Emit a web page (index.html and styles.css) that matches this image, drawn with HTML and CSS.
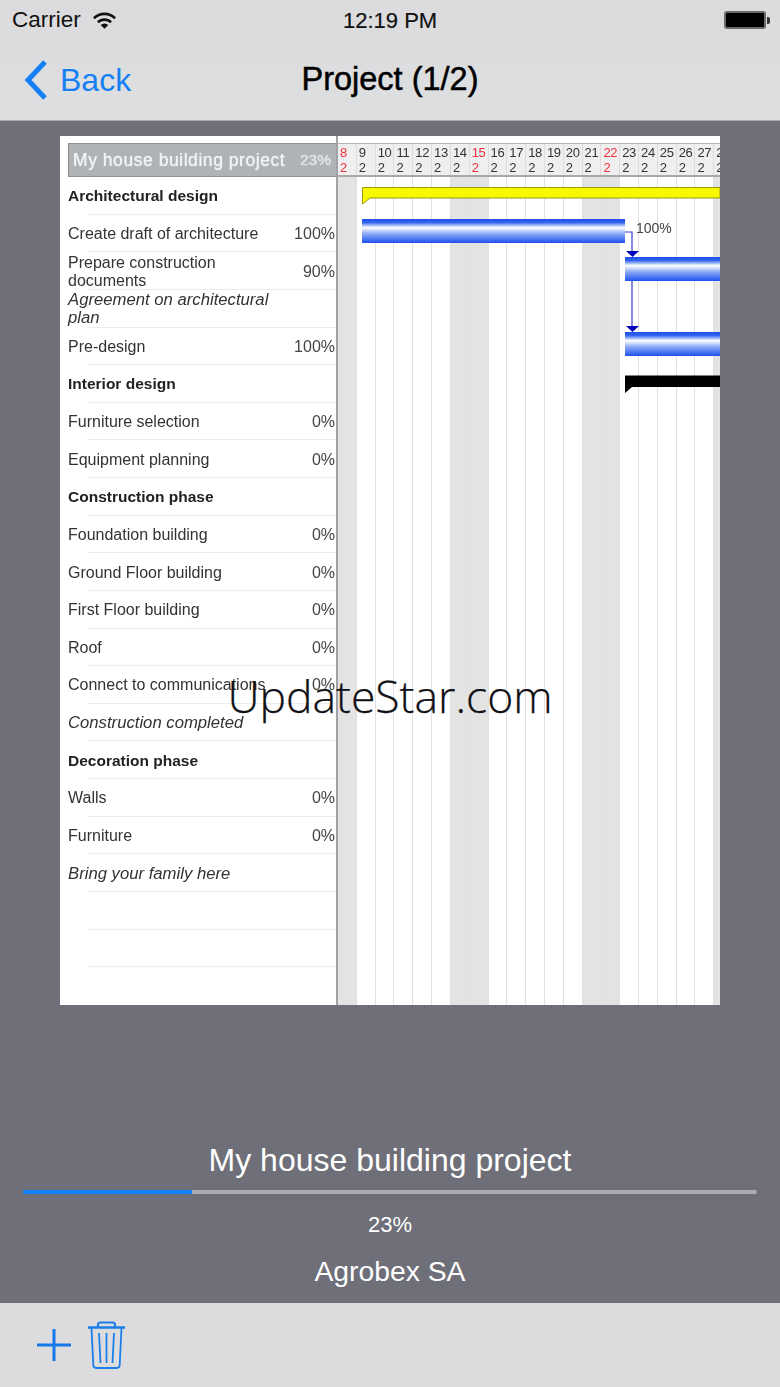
FILE: index.html
```html
<!DOCTYPE html>
<html lang="en">
<head>
<meta charset="utf-8">
<title>Project (1/2)</title>
<link rel="stylesheet" href="styles.css">
</head>
<body>
<div class="app">
  <header class="topbar">
    <div class="status">
      <div class="status-left">
        <span class="carrier">Carrier</span>
        <svg class="wifi" viewBox="0 0 24 18"><path d="M0 6.200a17 17 0 0 1 24 0l-1.900 2a14.200 14.200 0 0 0-20.200 0z"/><path d="M4.200 10.400a11 11 0 0 1 15.600 0l-1.900 2a8.300 8.300 0 0 0-11.800 0z"/><path d="M8 14.200a5.700 5.700 0 0 1 8 0L12 18z"/></svg>
      </div>
      <span class="time">12:19 PM</span>
      <div class="battery"><span class="battery-fill"></span><span class="battery-tip"></span></div>
    </div>
    <nav class="navbar">
      <a class="back">
        <svg class="chevron" viewBox="0 0 25 40"><path d="M22 2 5 20l17 18" fill="none" stroke="#1580f5" stroke-width="5"/></svg>
        <span>Back</span>
      </a>
      <h1 class="title">Project (1/2)</h1>
    </nav>
  </header>

  <main class="stage">
    <div class="shot">
      <section class="tasks">
        <div class="tasks-head"><span class="head-name">My house building project</span><span class="head-pct">23%</span></div>
        <div class="row"><span class="name bold">Architectural design</span></div>
        <div class="row"><span class="name">Create draft of architecture</span><span class="pct">100%</span></div>
        <div class="row"><span class="name">Prepare construction documents</span><span class="pct">90%</span></div>
        <div class="row"><span class="name ital">Agreement on architectural plan</span></div>
        <div class="row"><span class="name">Pre-design</span><span class="pct">100%</span></div>
        <div class="row"><span class="name bold">Interior design</span></div>
        <div class="row"><span class="name">Furniture selection</span><span class="pct">0%</span></div>
        <div class="row"><span class="name">Equipment planning</span><span class="pct">0%</span></div>
        <div class="row"><span class="name bold">Construction phase</span></div>
        <div class="row"><span class="name">Foundation building</span><span class="pct">0%</span></div>
        <div class="row"><span class="name">Ground Floor building</span><span class="pct">0%</span></div>
        <div class="row"><span class="name">First Floor building</span><span class="pct">0%</span></div>
        <div class="row"><span class="name">Roof</span><span class="pct">0%</span></div>
        <div class="row"><span class="name wide">Connect to communications</span><span class="pct">0%</span></div>
        <div class="row"><span class="name ital wide">Construction completed</span></div>
        <div class="row"><span class="name bold">Decoration phase</span></div>
        <div class="row"><span class="name">Walls</span><span class="pct">0%</span></div>
        <div class="row"><span class="name">Furniture</span><span class="pct">0%</span></div>
        <div class="row"><span class="name ital">Bring your family here</span></div>
        <div class="row"></div>
        <div class="row"></div>
        <div class="row last"></div>
      </section>
      <section class="chart">
        <div class="days">
          <div class="day red">8<br>2</div><div class="day">9<br>2</div><div class="day">10<br>2</div><div class="day">11<br>2</div><div class="day">12<br>2</div><div class="day">13<br>2</div><div class="day">14<br>2</div><div class="day red">15<br>2</div><div class="day">16<br>2</div><div class="day">17<br>2</div><div class="day">18<br>2</div><div class="day">19<br>2</div><div class="day">20<br>2</div><div class="day">21<br>2</div><div class="day red">22<br>2</div><div class="day">23<br>2</div><div class="day">24<br>2</div><div class="day">25<br>2</div><div class="day">26<br>2</div><div class="day">27<br>2</div><div class="day">28<br>2</div>
        </div>
        <div class="plot">
          <div class="cols">
            <i class="col off"></i><i class="col"></i><i class="col"></i><i class="col"></i><i class="col"></i><i class="col"></i><i class="col off"></i><i class="col off"></i><i class="col"></i><i class="col"></i><i class="col"></i><i class="col"></i><i class="col"></i><i class="col off"></i><i class="col off"></i><i class="col"></i><i class="col"></i><i class="col"></i><i class="col"></i><i class="col"></i><i class="col off"></i>
          </div>
          <svg class="links" viewBox="0 0 382 828">
            <path d="M24.500 10.500H382V21H32L24.500 27Z" fill="#f8f800" stroke="#9a9a10" stroke-width="1"/>
            <path d="M287 198.500H382V210H294L287 216Z" fill="#000"/>
            <path d="M287 55H294V76M294 104V150" fill="none" stroke="#3a3ad8" stroke-width="1.200"/>
            <path d="M288 74H301L294.500 80Z M288 149H301L294.500 155Z" fill="#0000b8"/>
          </svg>
          <div class="bar bar-a"></div>
          <div class="bar bar-b"></div>
          <div class="bar bar-c"></div>
          <span class="bar-label">100%</span>
        </div>
      </section>
    </div>
    <div class="watermark">UpdateStar.com</div>
    <div class="info">
      <div class="info-title">My house building project</div>
      <div class="progress"><div class="progress-fill"></div></div>
      <div class="info-pct">23%</div>
      <div class="info-owner">Agrobex SA</div>
    </div>
  </main>

  <footer class="toolbar">
    <svg class="plus" viewBox="0 0 34 32"><path d="M0 16h34M17 0v32" fill="none" stroke="#1577e8" stroke-width="3"/></svg>
    <svg class="trash" viewBox="0 0 37 48" fill="none" stroke="#1a7fe8" stroke-width="1.800"><path d="M0 6.500h37" stroke-width="2.400"/><path d="M10 6V4Q10 1.500 12.500 1.500h12Q27 1.500 27 4V6" stroke-width="2.200"/><path d="M3.500 7l1.800 37q.2 3 3 3h20.400q2.800 0 3-3L33.500 7"/><path d="M11 12l1.500 30M18.500 12v30M26 12l-1.500 30"/></svg>
  </footer>
</div>
</body>
</html>
```
FILE: styles.css
```css
* { box-sizing: border-box; }
html, body { margin: 0; padding: 0; }
body { font-family: "Liberation Sans", Arial, sans-serif; background: #6e6f78; }
.app { width: 780px; height: 1387px; display: flex; flex-direction: column; overflow: hidden; }

.topbar { height: 121px; background: linear-gradient(#dbdbdd, #dedfe0); border-bottom: 1px solid #a9aaac; flex: none; }
.status { height: 40px; padding: 0 10px 0 12px; display: flex; align-items: center; justify-content: space-between; color: #111; position: relative; }
.status-left { display: flex; align-items: center; gap: 12px; }
.carrier { font-size: 22.500px; }
.wifi { width: 23px; height: 18px; fill: #111; margin-top: -1px; }
.time { font-size: 22px; position: absolute; left: 343px; top: 8px; -webkit-text-stroke: 0.200px #111; }
.battery { display: flex; align-items: center; gap: 1px; }
.battery-fill { width: 42px; height: 18px; background: #000; border: 2px solid #6a6a6a; border-radius: 3px; }
.battery-tip { width: 3px; height: 7px; background: #333; border-radius: 0 2px 2px 0; }

.navbar { height: 80px; position: relative; display: flex; align-items: center; justify-content: center; padding-bottom: 1px; }
.back { position: absolute; left: 23px; top: 0; height: 80px; display: flex; align-items: center; gap: 12px; color: #1580f5; font-size: 32px; }
.chevron { width: 25px; height: 40px; }
.title { margin: 0; font-size: 32.500px; font-weight: 400; color: #000; -webkit-text-stroke: 0.500px #000; }

.stage { flex: 1; background: #6e6f78; padding-top: 15px; position: relative; display: flex; flex-direction: column; align-items: center; }
.shot { width: 660px; height: 869px; background: #fff; display: flex; overflow: hidden; filter: blur(0.400px); flex: none; }

.tasks { width: 278px; padding: 7px 0 0 8px; border-right: 2px solid #a2a2a6; flex: none; font-size: 16px; color: #333; }
.tasks-head { height: 34px; background: #b0b3b6; border: 1px solid #8d9093; border-right: 0; color: #f2f2f2; padding: 0 5px 0 4px; display: flex; align-items: center; justify-content: space-between; text-shadow: 0 0 1px #fff; }
.head-name { font-size: 17.500px; letter-spacing: 0.550px; }
.head-pct { font-size: 15.500px; color: #dfe0e2; }
.row { height: 37.640px; position: relative; display: flex; align-items: center; justify-content: space-between; padding: 1px 1px 0 0; line-height: 18px; }
.row::after { content: ""; position: absolute; left: 20px; right: 0; bottom: 0; height: 1px; background: #ececec; }
.row.last::after { display: none; }
.name { width: 215px; }
.name.wide { width: auto; white-space: nowrap; }
.bold { font-weight: 700; color: #222; font-size: 15.500px; }
.ital { font-style: italic; font-size: 16.700px; }
.pct { color: #444; }

.chart { flex: 1; display: flex; flex-direction: column; padding-top: 7px; min-width: 0; }
.days { height: 34px; display: flex; background: #efefef; border-top: 1px solid #b5b5b5; border-bottom: 2px solid #a8a8a8; flex: none; overflow: hidden; }
.day { flex: 0 0 18.820px; min-width: 0; padding: 1px 0 0 2px; font-size: 13px; letter-spacing: -0.300px; line-height: 15px; color: #333; white-space: nowrap; border-right: 1px solid #e6d9d9; }
.red { color: #f0303c; }
.plot { flex: 1; position: relative; }
.cols { display: flex; height: 100%; }
.col { flex: 0 0 18.820px; border-right: 1.500px solid #e0e0e0; }
.off { background: #e3e3e3; }
.links { position: absolute; left: 0; top: 0; width: 382px; height: 828px; }
.bar { position: absolute; height: 24px; background: linear-gradient(#1e50e6 0, #2e62ee 14%, #fff 36%, #8aa8f6 62%, #1e50ee 100%); }
.bar-a { left: 24px; top: 42px; width: 263px; }
.bar-b { left: 287px; top: 80px; width: 95px; }
.bar-c { left: 287px; top: 155px; width: 95px; }
.bar-label { position: absolute; left: 298px; top: 43px; font-size: 14px; color: #444; }

.watermark { position: absolute; left: 0; right: 0; top: 545px; text-align: center; font-family: "Open Sans", sans-serif; font-weight: 300; font-size: 44.500px; line-height: 60px; color: #111116; -webkit-text-stroke: 0.250px #111116; }

.info { position: absolute; left: 0; right: 0; top: 1017px; display: flex; flex-direction: column; align-items: center; color: #fff; }
.info-title { font-size: 32px; line-height: 44px; height: 46px; }
.progress { width: 734px; height: 4px; background: #abacb1; border-radius: 2px; margin-top: 6px; }
.progress-fill { width: 169px; height: 100%; background: #1580f5; border-radius: 2px 0 0 2px; }
.info-pct { font-size: 22px; line-height: 24px; margin-top: 19px; }
.info-owner { font-size: 28.300px; line-height: 36px; margin-top: 16px; }

.toolbar { height: 84px; flex: none; background: #dcdcdf; display: flex; align-items: flex-start; padding: 18px 0 0 37px; gap: 17px; }
.plus { width: 34px; height: 32px; margin-top: 8px; }
.trash { width: 37px; height: 48px; }
```
